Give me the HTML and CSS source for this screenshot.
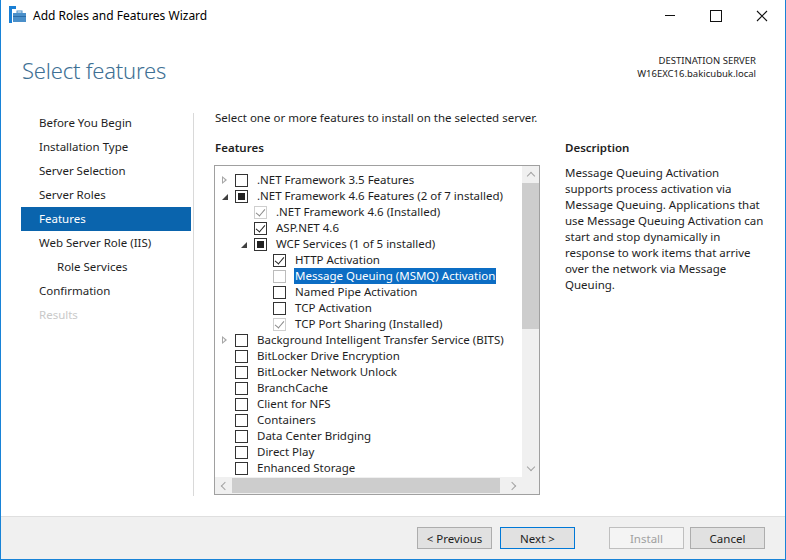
FILE: index.html
```html
<!DOCTYPE html>
<html lang="en">
<head>
    <meta charset="UTF-8">
    <title>Add Roles and Features Wizard</title>
    <link rel="stylesheet" href="styles.css">
</head>
<body>
<div class="window">
    <div class="titlebar">
        <svg class="app-icon" width="18" height="18" viewBox="0 0 18 18">
            <rect x="0" y="0" width="7" height="3" fill="#1a7fd4"/>
            <rect x="0" y="0" width="3" height="17" fill="#1a7fd4"/>
            <rect x="4" y="7" width="13" height="9" fill="#4a8fc9"/>
            <rect x="8" y="5" width="5" height="2" fill="none" stroke="#4a8fc9" stroke-width="1"/>
            <rect x="4" y="10" width="13" height="1" fill="#2a6ca8"/>
        </svg>
        <span class="title">Add Roles and Features Wizard</span>
        <div class="controls">
            <span class="ctl ctl-min"></span>
            <span class="ctl ctl-max"></span>
            <span class="ctl ctl-close">
                <svg width="12" height="12" viewBox="0 0 12 12"><path d="M1 1 L11 11 M11 1 L1 11" stroke="#111" stroke-width="1.1"/></svg>
            </span>
        </div>
    </div>

    <div class="header">
        <h1 class="page-title">Select features</h1>
        <div class="dest">
            <div>DESTINATION SERVER</div>
            <div>W16EXC16.bakicubuk.local</div>
        </div>
    </div>

    <div class="main">
        <nav class="steps">
            <div class="step">Before You Begin</div>
            <div class="step">Installation Type</div>
            <div class="step">Server Selection</div>
            <div class="step">Server Roles</div>
            <div class="step active">Features</div>
            <div class="step">Web Server Role (IIS)</div>
            <div class="step sub">Role Services</div>
            <div class="step">Confirmation</div>
            <div class="step disabled">Results</div>
        </nav>

        <section class="content">
            <p class="intro">Select one or more features to install on the selected server.</p>
            <div class="columns">
                <div class="features">
                    <div class="label">Features</div>
                    <div class="tree-box">
                        <div class="tree">
                            <div class="row l0"><span class="exp closed"></span><span class="cb"></span><span class="txt">.NET Framework 3.5 Features</span></div>
                            <div class="row l0"><span class="exp open"></span><span class="cb partial"></span><span class="txt">.NET Framework 4.6 Features (2 of 7 installed)</span></div>
                            <div class="row l1"><span class="exp"></span><span class="cb checked disabled"></span><span class="txt">.NET Framework 4.6 (Installed)</span></div>
                            <div class="row l1"><span class="exp"></span><span class="cb checked"></span><span class="txt">ASP.NET 4.6</span></div>
                            <div class="row l1"><span class="exp open"></span><span class="cb partial"></span><span class="txt">WCF Services (1 of 5 installed)</span></div>
                            <div class="row l2"><span class="exp"></span><span class="cb checked"></span><span class="txt">HTTP Activation</span></div>
                            <div class="row l2"><span class="exp"></span><span class="cb faint"></span><span class="txt selected">Message Queuing (MSMQ) Activation</span></div>
                            <div class="row l2"><span class="exp"></span><span class="cb"></span><span class="txt">Named Pipe Activation</span></div>
                            <div class="row l2"><span class="exp"></span><span class="cb"></span><span class="txt">TCP Activation</span></div>
                            <div class="row l2"><span class="exp"></span><span class="cb checked disabled"></span><span class="txt">TCP Port Sharing (Installed)</span></div>
                            <div class="row l0"><span class="exp closed"></span><span class="cb"></span><span class="txt">Background Intelligent Transfer Service (BITS)</span></div>
                            <div class="row l0"><span class="exp"></span><span class="cb"></span><span class="txt">BitLocker Drive Encryption</span></div>
                            <div class="row l0"><span class="exp"></span><span class="cb"></span><span class="txt">BitLocker Network Unlock</span></div>
                            <div class="row l0"><span class="exp"></span><span class="cb"></span><span class="txt">BranchCache</span></div>
                            <div class="row l0"><span class="exp"></span><span class="cb"></span><span class="txt">Client for NFS</span></div>
                            <div class="row l0"><span class="exp"></span><span class="cb"></span><span class="txt">Containers</span></div>
                            <div class="row l0"><span class="exp"></span><span class="cb"></span><span class="txt">Data Center Bridging</span></div>
                            <div class="row l0"><span class="exp"></span><span class="cb"></span><span class="txt">Direct Play</span></div>
                            <div class="row l0"><span class="exp"></span><span class="cb"></span><span class="txt">Enhanced Storage</span></div>
                        </div>
                        <div class="vscroll">
                            <span class="arrow up"></span>
                            <div class="track"><div class="thumb"></div></div>
                            <span class="arrow down"></span>
                        </div>
                        <div class="hscroll">
                            <span class="arrow left"></span>
                            <div class="track"><div class="thumb"></div></div>
                            <span class="arrow right"></span>
                        </div>
                        <div class="corner"></div>
                    </div>
                </div>
                <div class="desc">
                    <div class="label">Description</div>
                    <p>Message Queuing Activation supports process activation via Message Queuing. Applications that use Message Queuing Activation can start and stop dynamically in response to work items that arrive over the network via Message Queuing.</p>
                </div>
            </div>
        </section>
    </div>

    <div class="footer">
        <button class="btn">&lt; Previous</button>
        <button class="btn default">Next &gt;</button>
        <button class="btn install" disabled>Install</button>
        <button class="btn cancel">Cancel</button>
    </div>
</div>
</body>
</html>
```

FILE: styles.css
```css
* {
    box-sizing: border-box;
}

body {
    margin: 0;
    font-family: 'Noto Sans', 'Open Sans', sans-serif;
    font-size: 11.5px;
    color: #1e1e1e;
    background: #fff;
}

.window {
    width: 786px;
    height: 560px;
    display: flex;
    flex-direction: column;
    border: 1px solid #1883d7;
    border-top: none;
    background: #fff;
}

/* title bar */
.titlebar {
    height: 31px;
    flex: none;
    display: flex;
    align-items: center;
    padding-left: 8px;
}

.app-icon {
    margin-right: 6px;
    margin-top: -1px;
}

.title {
    font-size: 12px;
    color: #000;
}

.controls {
    margin-left: auto;
    display: flex;
    height: 100%;
}

.ctl {
    width: 46px;
    height: 100%;
    display: flex;
    align-items: center;
    justify-content: center;
}

.ctl-min::before {
    content: '';
    width: 10px;
    height: 1px;
    background: #111;
}

.ctl-max::before {
    content: '';
    width: 10px;
    height: 10px;
    border: 1px solid #111;
}

/* header */
.header {
    height: 69px;
    flex: none;
    display: flex;
    justify-content: space-between;
    padding: 0 29px 0 21px;
}

.page-title {
    margin: 24px 0 0;
    font-weight: 300;
    font-size: 22px;
    color: #3e7094;
    letter-spacing: -0.2px;
}

.dest {
    margin-top: 23px;
    text-align: right;
    font-size: 9.5px;
    line-height: 13px;
    color: #222;
}

/* main area */
.main {
    flex: 1;
    display: flex;
    min-height: 0;
}

.steps {
    width: 193px;
    padding-left: 20px;
    border-right: 1px solid #d9d9d9;
    margin: 13px 0 20px;
}

.step {
    height: 24px;
    line-height: 23px;
    padding-left: 18px;
    margin-right: 2px;
    color: #1e1e1e;
}

.step:first-child {
    margin-top: -2px;
}

.step.sub {
    padding-left: 36px;
}

.step.active {
    background: #0a64ad;
    color: #fff;
}

.step.disabled {
    color: #c9c9c9;
}

.content {
    flex: 1;
    padding-left: 21px;
}

.intro {
    margin: 9px 0 0;
    line-height: 18px;
}

.columns {
    display: flex;
    margin-top: 13px;
}

.label {
    font-weight: 600;
    line-height: 16px;
    margin-bottom: 9px;
}

.features {
    width: 325px;
}

/* tree */
.tree-box {
    width: 326px;
    height: 330px;
    border: 1px solid #a0a0a0;
    margin-left: -1px;
    display: grid;
    grid-template-columns: 1fr 17px;
    grid-template-rows: 1fr 17px;
}

.tree {
    overflow: hidden;
    padding-top: 6px;
}

.row {
    height: 16px;
    display: flex;
    align-items: center;
    white-space: nowrap;
}

.row.l0 { padding-left: 3px; }
.row.l1 { padding-left: 22px; }
.row.l2 { padding-left: 41px; }

.exp {
    width: 17px;
    height: 16px;
    flex: none;
    position: relative;
}

.exp.closed::before {
    content: '';
    position: absolute;
    left: 4px;
    top: 4px;
    border-left: 5px solid #a6a6a6;
    border-top: 4px solid transparent;
    border-bottom: 4px solid transparent;
}

.exp.closed::after {
    content: '';
    position: absolute;
    left: 5px;
    top: 6px;
    border-left: 2px solid #fff;
    border-top: 2px solid transparent;
    border-bottom: 2px solid transparent;
}

.exp.open::before {
    content: '';
    position: absolute;
    left: 4px;
    top: 6px;
    border-right: 6px solid #404040;
    border-top: 6px solid transparent;
}

.cb {
    width: 13px;
    height: 13px;
    flex: none;
    border: 1px solid #333;
    background: #fff;
    position: relative;
    margin-right: 9px;
}

.cb.faint {
    border-color: #bcbcbc;
}

.cb.partial::after {
    content: '';
    position: absolute;
    left: 2px;
    top: 2px;
    width: 7px;
    height: 7px;
    background: #222;
}

.cb.checked::after {
    content: '';
    position: absolute;
    left: 3px;
    top: 0px;
    width: 4px;
    height: 8px;
    border-right: 1.5px solid #222;
    border-bottom: 1.5px solid #222;
    transform: rotate(40deg);
}

.cb.disabled {
    border-color: #cfcfcf;
}

.cb.disabled::after {
    border-color: #8a8a8a;
}

.txt {
    line-height: 16px;
    padding: 0 1px;
    margin-left: -1px;
}

.txt.selected {
    background: #0c6dc4;
    color: #fff;
}

/* scrollbars */
.vscroll,
.hscroll {
    background: #f0f0f0;
    display: flex;
}

.vscroll {
    flex-direction: column;
}

.vscroll .track {
    flex: 1;
}

.vscroll .thumb {
    width: 100%;
    height: 146px;
    background: #cdcdcd;
}

.hscroll .track {
    flex: 1;
    padding-top: 1px;
}

.hscroll .thumb {
    height: 15px;
    width: 268px;
    background: #cdcdcd;
}

.corner {
    background: #f0f0f0;
}

.arrow {
    width: 17px;
    height: 17px;
    flex: none;
    position: relative;
}

.arrow::before {
    content: '';
    position: absolute;
    width: 5px;
    height: 5px;
    border-left: 1px solid #a3a3a3;
    border-top: 1px solid #a3a3a3;
}

.arrow.up::before { left: 6px; top: 7px; transform: rotate(45deg); }
.arrow.down::before { left: 6px; top: 4px; transform: rotate(225deg); }
.arrow.left::before { left: 7px; top: 6px; transform: rotate(-45deg); }
.arrow.right::before { left: 4px; top: 6px; transform: rotate(135deg); }

/* description */
.desc {
    margin-left: 25px;
    width: 205px;
}

.desc p {
    margin: 0;
    line-height: 16px;
    margin-top: 3px;
}

/* footer */
.footer {
    height: 43px;
    flex: none;
    background: #f0f0f0;
    border-top: 1px solid #dfdfdf;
    display: flex;
    align-items: flex-start;
    padding: 10px 20px 0 0;
    justify-content: flex-end;
}

.btn {
    width: 75px;
    height: 22px;
    margin-left: 8px;
    font-family: inherit;
    font-size: 11.5px;
    color: #1e1e1e;
    background: #e1e1e1;
    border: 1px solid #adadad;
    padding: 0;
}

.btn.default {
    border-color: #0078d7;
}

.btn.install {
    margin-left: 34px;
}

.btn.cancel {
    margin-left: 6px;
}

.btn:disabled {
    background: #f4f4f4;
    border-color: #bfbfbf;
    color: #a0a0a0;
}
```
